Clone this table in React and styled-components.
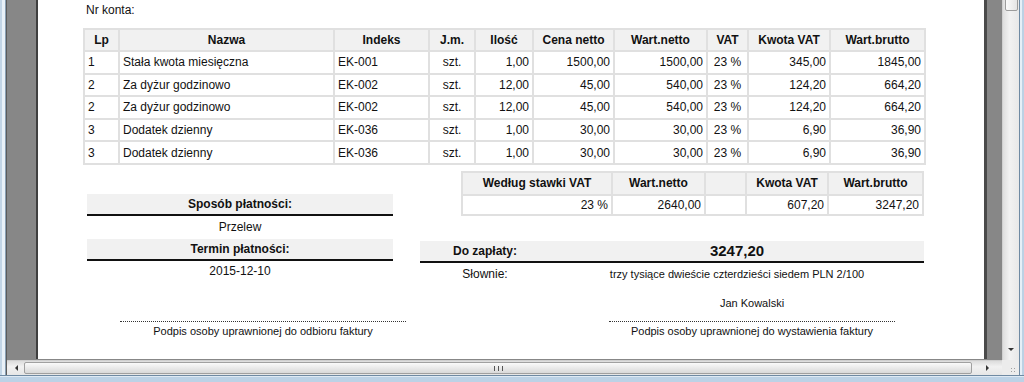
import React from "react";
import styled, { createGlobalStyle } from "styled-components";

const Global = createGlobalStyle`
  html, body { margin: 0; padding: 0; overflow: hidden; background: #c9dbea; }
  * { box-sizing: border-box; }
`;

const Window = styled.div`
  width: 1024px;
  height: 382px;
  display: grid;
  grid-template-columns: 7px 995px 17px 5px;
  grid-template-rows: 360px 15px 7px;
  background: linear-gradient(#c6d9ea, #b4cde3);
  font-family: "Liberation Sans", Arial, sans-serif;
  color: #111;
`;

const FrameLeft = styled.div`
  grid-column: 1;
  grid-row: 1 / 3;
  background: linear-gradient(to right, #c2d5e6 0 2px, #e9f1f8 2px 5px, #8aa0b4 5px 6px, #5c5c5c 6px 7px);
`;

const FrameRight = styled.div`
  grid-column: 4;
  grid-row: 1 / 3;
  background: linear-gradient(to right, #6f8aa3 0 1px, #e6eff7 1px 3px, #bcd1e4 3px 5px);
`;

const FrameBottom = styled.div`
  grid-column: 1 / 5;
  grid-row: 3;
  background: linear-gradient(#6f8aa3 0 1px, #dfeaf4 1px 2px, #bcd2e6 2px 7px);
`;

const Viewport = styled.div`
  grid-column: 2;
  grid-row: 1;
  background: #878787;
  padding-left: 29px;
  padding-right: 15px;
  padding-bottom: 1px;
  display: flex;
  overflow: hidden;
`;

const Page = styled.div`
  width: 951px;
  height: 100%;
  background: #fff;
  border-left: 2px solid #3f3f3f;
  border-right: 3px solid #4a4a4a;
  padding-left: 45px;
  display: flex;
  flex-direction: column;
`;

const AccountLine = styled.div`
  font-size: 12px;
  height: 28px;
  padding: 3px 0 0 3px;
`;

const Table = styled.table`
  border-collapse: collapse;
  table-layout: fixed;
  width: ${(p) => p.$w}px;
  font-size: 12px;
`;

const HeadCell = styled.th`
  background: #f1f1f1;
  border: 2px solid #e0e0e0;
  font-weight: bold;
  text-align: center;
  padding: 0 3px;
  height: ${(p) => p.$h || 22}px;
  white-space: nowrap;
`;

const Cell = styled.td`
  border: 2px solid #e0e0e0;
  padding: 0 3px;
  height: ${(p) => p.$h || 22.6}px;
  text-align: ${(p) => p.$align || "left"};
  white-space: nowrap;
`;

const Lower = styled.div`
  display: flex;
  width: 841px;
`;

const LeftCol = styled.div`
  width: 306px;
  margin-left: 4px;
  margin-top: 29px;
  display: flex;
  flex-direction: column;
`;

const RightCol = styled.div`
  margin-left: 27px;
  width: 504px;
  display: flex;
  flex-direction: column;
`;

const SummaryWrap = styled.div`
  margin-top: 6px;
  align-self: flex-end;
`;

const BlockHead = styled.div`
  background: #f1f1f1;
  border-bottom: 2px solid #111;
  height: 22px;
  font-size: 12px;
  font-weight: bold;
  display: grid;
  grid-template-columns: ${(p) => p.$cols || "1fr"};
  align-items: center;
  text-align: center;
`;

const BlockValue = styled.div`
  font-size: 12px;
  text-align: center;
  height: ${(p) => p.$h || 23}px;
  line-height: ${(p) => p.$h || 23}px;
`;

const Amount = styled.span`
  font-size: 15px;
  font-weight: bold;
`;

const PayBlock = styled.div`
  margin-top: 25px;
`;

const WordsRow = styled.div`
  display: grid;
  grid-template-columns: 130px 1fr;
  text-align: center;
  height: 22px;
  align-items: center;
`;

const Label = styled.span`
  font-size: 12px;
`;

const Small = styled.span`
  font-size: 11px;
`;

const Signatures = styled.div`
  display: flex;
  width: 841px;
  margin-top: ${(p) => p.$top}px;
`;

const SignBlock = styled.div`
  width: 286px;
  margin-left: ${(p) => p.$left}px;
  display: flex;
  flex-direction: column;
  align-items: stretch;
  text-align: center;
  font-size: 11px;
`;

const SignName = styled.div`
  height: 25px;
  line-height: 14px;
`;

const Dots = styled.div`
  border-top: 1px dotted #333;
  height: 4px;
`;

const VScroll = styled.div`
  grid-column: 3;
  grid-row: 1;
  background: linear-gradient(to right, #dedede, #f2f2f2 40%, #e8e8e8);
  border-left: 1px solid #d0d0d0;
  display: flex;
  flex-direction: column;
  justify-content: space-between;
  align-items: center;
`;

const VThumb = styled.div`
  width: 13px;
  height: 13px;
  margin-top: -2px;
  border: 1px solid #9c9c9c;
  border-radius: 2px;
  background: linear-gradient(to right, #fbfbfb, #e4e4e4);
`;

const Arrow = styled.div`
  width: 0;
  height: 0;
  ${(p) =>
    p.$dir === "down"
      ? `border-left: 3px solid transparent; border-right: 3px solid transparent; border-top: 3px solid #333; margin-bottom: 9px;`
      : p.$dir === "left"
      ? `border-top: 3px solid transparent; border-bottom: 3px solid transparent; border-right: 3px solid #333;`
      : `border-top: 3px solid transparent; border-bottom: 3px solid transparent; border-left: 3px solid #333;`}
`;

const HScroll = styled.div`
  grid-column: 2;
  grid-row: 2;
  background: linear-gradient(#dcdcdc, #f1f1f1 40%, #e6e6e6);
  border-top: 1px solid #cfcfcf;
  display: flex;
  align-items: stretch;
  padding-left: 1px;
`;

const ArrowBtn = styled.div`
  width: ${(p) => p.$w || 16}px;
  display: flex;
  align-items: center;
  justify-content: center;
  flex-shrink: 0;
`;

const HThumb = styled.div`
  width: 948px;
  margin: 1px 0;
  border: 1px solid #a0a0a0;
  border-radius: 2px;
  background: linear-gradient(#fafafa, #e9e9e9 50%, #d9d9d9);
  display: flex;
  align-items: center;
  justify-content: center;
  gap: 1px;
`;

const Grip = styled.span`
  width: 1px;
  height: 5px;
  background: #555;
  margin: 0 1px;
`;

const Corner = styled.div`
  grid-column: 3;
  grid-row: 2;
  background: #ececec;
  display: flex;
  align-items: flex-end;
  justify-content: flex-end;
  padding: 0 3px 2px 0;
`;

const GripDots = styled.div`
  width: 6px;
  height: 6px;
  background-image: radial-gradient(circle, #a0a0a0 0.8px, transparent 1px);
  background-size: 3px 3px;
`;

const cols = [35, 215, 95, 46, 58, 81, 93, 41, 82, 95];
const heads = ["Lp", "Nazwa", "Indeks", "J.m.", "Ilość", "Cena netto", "Wart.netto", "VAT", "Kwota VAT", "Wart.brutto"];
const aligns = ["left", "left", "left", "center", "right", "right", "right", "center", "right", "right"];
const rows = [
  ["1", "Stała kwota miesięczna", "EK-001", "szt.", "1,00", "1500,00", "1500,00", "23 %", "345,00", "1845,00"],
  ["2", "Za dyżur godzinowo", "EK-002", "szt.", "12,00", "45,00", "540,00", "23 %", "124,20", "664,20"],
  ["2", "Za dyżur godzinowo", "EK-002", "szt.", "12,00", "45,00", "540,00", "23 %", "124,20", "664,20"],
  ["3", "Dodatek dzienny", "EK-036", "szt.", "1,00", "30,00", "30,00", "23 %", "6,90", "36,90"],
  ["3", "Dodatek dzienny", "EK-036", "szt.", "1,00", "30,00", "30,00", "23 %", "6,90", "36,90"],
];

const sumCols = [150, 93, 41, 82, 95];
const sumHeads = ["Według stawki VAT", "Wart.netto", "", "Kwota VAT", "Wart.brutto"];
const sumRow = ["23 %", "2640,00", "", "607,20", "3247,20"];

export default function App() {
  return (
    <>
      <Global />
      <Window>
        <FrameLeft />
        <Viewport>
          <Page>
            <AccountLine>Nr konta:</AccountLine>
            <Table $w={841}>
              <colgroup>
                {cols.map((w, i) => (
                  <col key={i} style={{ width: w }} />
                ))}
              </colgroup>
              <thead>
                <tr>
                  {heads.map((h) => (
                    <HeadCell key={h}>{h}</HeadCell>
                  ))}
                </tr>
              </thead>
              <tbody>
                {rows.map((r, i) => (
                  <tr key={i}>
                    {r.map((c, j) => (
                      <Cell key={j} $align={aligns[j]}>
                        {c}
                      </Cell>
                    ))}
                  </tr>
                ))}
              </tbody>
            </Table>
            <Lower>
              <LeftCol>
                <BlockHead>Sposób płatności:</BlockHead>
                <BlockValue>Przelew</BlockValue>
                <BlockHead>Termin płatności:</BlockHead>
                <BlockValue $h={20}>2015-12-10</BlockValue>
              </LeftCol>
              <RightCol>
                <SummaryWrap>
                  <Table $w={461}>
                    <colgroup>
                      {sumCols.map((w, i) => (
                        <col key={i} style={{ width: w }} />
                      ))}
                    </colgroup>
                    <thead>
                      <tr>
                        {sumHeads.map((h, i) => (
                          <HeadCell key={i} $h={23}>
                            {h}
                          </HeadCell>
                        ))}
                      </tr>
                    </thead>
                    <tbody>
                      <tr>
                        {sumRow.map((c, i) => (
                          <Cell key={i} $align="right" $h={20}>
                            {c}
                          </Cell>
                        ))}
                      </tr>
                    </tbody>
                  </Table>
                </SummaryWrap>
                <PayBlock>
                  <BlockHead $cols="130px 1fr">
                    <span>Do zapłaty:</span>
                    <Amount>3247,20</Amount>
                  </BlockHead>
                  <WordsRow>
                    <Label>Słownie:</Label>
                    <Small>trzy tysiące dwieście czterdzieści siedem PLN 2/100</Small>
                  </WordsRow>
                </PayBlock>
              </RightCol>
            </Lower>
            <Signatures $top={11}>
              <SignBlock $left={37}>
                <SignName />
                <Dots />
                <div>Podpis osoby uprawnionej do odbioru faktury</div>
              </SignBlock>
              <SignBlock $left={203}>
                <SignName>Jan Kowalski</SignName>
                <Dots />
                <div>Podpis osoby uprawnionej do wystawienia faktury</div>
              </SignBlock>
            </Signatures>
          </Page>
        </Viewport>
        <VScroll>
          <VThumb />
          <Arrow $dir="down" />
        </VScroll>
        <FrameRight />
        <HScroll>
          <ArrowBtn>
            <Arrow $dir="left" />
          </ArrowBtn>
          <HThumb>
            <Grip />
            <Grip />
            <Grip />
          </HThumb>
          <ArrowBtn $w={30}>
            <Arrow $dir="right" />
          </ArrowBtn>
        </HScroll>
        <Corner>
          <GripDots />
        </Corner>
        <FrameBottom />
      </Window>
    </>
  );
}
